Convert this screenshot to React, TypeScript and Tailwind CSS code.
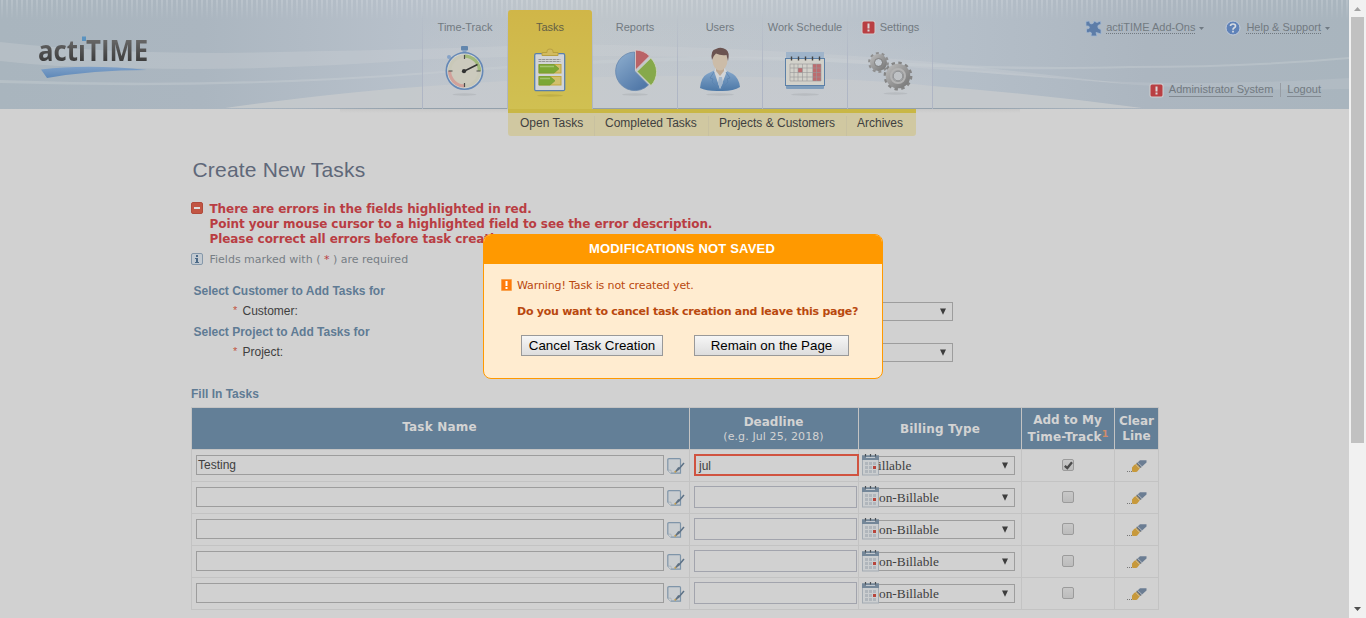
import React from "react";

const ARIAL = "font-['Liberation_Sans',Arial,sans-serif]";
const VERDANA = "font-['DejaVu_Sans',Verdana,sans-serif]";

function HeaderBackdrop() {
  return (
    <svg className="absolute inset-0" width="1349" height="114" viewBox="0 0 1349 114">
      <defs>
        <linearGradient id="sky" x1="0" x2="1" y1="0" y2="0">
          <stop offset="0" stopColor="#a9b5be" />
          <stop offset="0.15" stopColor="#abb6c0" />
          <stop offset="0.3" stopColor="#b7c0ca" />
          <stop offset="0.43" stopColor="#bfc6cb" />
          <stop offset="0.6" stopColor="#bcc4cc" />
          <stop offset="0.7" stopColor="#b5bfc9" />
          <stop offset="0.85" stopColor="#acb6c0" />
          <stop offset="1" stopColor="#a9b5be" />
        </linearGradient>
        <linearGradient id="shade" x1="0" x2="0" y1="0" y2="1">
          <stop offset="0" stopColor="#bdbdbd" />
          <stop offset="1" stopColor="#d1d1d1" />
        </linearGradient>
        <linearGradient id="line" x1="0" x2="1" y1="0" y2="0">
          <stop offset="0" stopColor="#93a0ab" stopOpacity="0" />
          <stop offset="0.2" stopColor="#93a0ab" />
          <stop offset="0.8" stopColor="#93a0ab" />
          <stop offset="1" stopColor="#93a0ab" stopOpacity="0" />
        </linearGradient>
        <linearGradient id="glow" x1="0" x2="0" y1="0" y2="1">
          <stop offset="0" stopColor="#c6cad0" stopOpacity="0" />
          <stop offset="1" stopColor="#c6cad0" stopOpacity="0.55" />
        </linearGradient>
        <pattern id="pin" width="5" height="20" patternUnits="userSpaceOnUse">
          <rect x="1" width="2" height="20" fill="#fff" />
        </pattern>
        <linearGradient id="mg" x1="0" x2="0" y1="0" y2="1">
          <stop offset="0" stopColor="#fff" />
          <stop offset="1" stopColor="#000" />
        </linearGradient>
        <mask id="m">
          <rect width="1349" height="20" fill="url(#mg)" />
        </mask>
      </defs>
      <rect width="1349" height="109" fill="url(#sky)" />
      <rect width="1349" height="20" fill="url(#pin)" mask="url(#m)" opacity="0.16" />
      <path d="M0 42Q100 53 220 53Q430 50 560 44Q760 47 932 62L1130 84L932 69Q700 50 430 59Q260 72 130 68Q60 68 0 61Z" fill="#cfd3d6" opacity="0.3" />
      <path d="M0 80Q220 88 430 72Q660 52 830 58Q1000 70 1130 66Q1250 66 1349 57V59Q1250 68 1130 68Q1000 72 830 62Q660 56 430 74Q220 90 0 83Z" fill="#cfd3d6" opacity="0.35" />
      <path d="M932 68Q1090 84 1200 83Q1290 82 1349 78V89Q1180 92 1060 78Q990 70 932 68Z" fill="#cfd3d6" opacity="0.22" />
      <path d="M225 108Q340 92 430 86Q560 76 680 76Q850 77 932 86Q1040 94 1142 108Z" fill="#c7cacd" opacity="0.85" />
      <rect x="423" y="20" width="509" height="88" fill="url(#glow)" />
      <rect x="225" y="108" width="920" height="1" fill="url(#line)" />
      <rect x="340" y="109" width="680" height="4" fill="url(#shade)" opacity="0.45" />
    </svg>
  );
}

function Logo() {
  return (
    <div className="relative w-[160px] pt-[4px]">
      <svg className="absolute top-0 left-0" width="116" height="56" viewBox="-2 -12 116 56">
        <defs>
          <linearGradient id="swoosh" x1="0" y1="0" x2="0" y2="1">
            <stop offset="0" stopColor="#7ea0c8" />
            <stop offset="1" stopColor="#5e88b8" />
          </linearGradient>
        </defs>
        <rect x="44" y="1.500" width="4" height="4.500" fill="#5b93c0" />
        <path d="M3 34.500Q50 29 109 35Q55 35 9 43Z" fill="url(#swoosh)" />
      </svg>
      <div className="relative ml-[2px] w-[140px] origin-left scale-x-[0.89] bg-linear-to-b from-[#666] from-30% to-[#3a3a3a] to-80% bg-clip-text font-['Open_Sans',sans-serif] text-[29px] leading-[45px] font-bold whitespace-nowrap text-transparent">
        actıTIME
      </div>
    </div>
  );
}

function Alert() {
  return (
    <svg width="15" height="15" viewBox="0 0 15 15" className="shrink-0">
      <rect x="0.500" y="0.500" width="14" height="14" rx="2.500" fill="#d0cfd0" />
      <rect x="1.500" y="1.500" width="12" height="12" rx="1.500" fill="#b93f43" />
      <path d="M6.500 3.500h2v5h-2zM6.500 9.500h2v2h-2z" fill="#dcd6d6" />
    </svg>
  );
}

function Stopwatch() {
  return (
    <svg width="44" height="54" viewBox="0.500 0 44 54">
      <ellipse cx="22" cy="50.500" rx="12" ry="1.200" fill="#a9adb1" opacity="0.500" />
      <rect x="18.500" y="2" width="7" height="4.500" rx="1" fill="#6286ad" />
      <rect x="20" y="6" width="4" height="3" fill="#86a2c1" />
      <circle cx="6.500" cy="13" r="2" fill="#86a2c7" />
      <circle cx="22" cy="27" r="18.200" fill="#d1d4d2" stroke="#6588b6" strokeWidth="1.600" />
      <circle cx="22" cy="27" r="16.600" fill="#c9c8b8" />
      <path d="M22 27V10.400A16.600 16.600 0 0 1 38.600 27Z" fill="#a0b979" />
      <path d="M22 27H5.400A16.600 16.600 0 0 0 22 43.600Z" fill="#d1a19a" />
      <circle cx="22" cy="27" r="13.300" fill="#cccabd" />
      <path d="M22 11v4M22 39v4M6 27h4M34 27h4" stroke="#4c4c4c" strokeWidth="1.200" />
      <path d="M22 27L35 20.500" stroke="#333" strokeWidth="1.400" />
      <circle cx="21.500" cy="27.200" r="2.100" fill="#333" />
    </svg>
  );
}

function Clipboard() {
  return (
    <svg width="44" height="54" viewBox="0 0 44 54">
      <ellipse cx="22" cy="51.500" rx="13" ry="1.200" fill="#a89838" opacity="0.400" />
      <rect x="6.700" y="9.700" width="30" height="37" rx="1.500" fill="#d2d4d6" stroke="#5980ad" strokeWidth="1.300" />
      <path d="M14 11.500V8.500h5V7q0-2 3-2t3 2v1.500h5v3Z" fill="#d2bb60" stroke="#b9a040" />
      <path d="M10.500 15.500h22M10.500 17.500h22" stroke="#8f8f8f" strokeWidth="0.900" strokeDasharray="3 .6" />
      <rect x="11" y="20.500" width="22" height="8.500" fill="#d1c06d" stroke="#c3a93c" />
      <path d="M11 20.500h15l5 4.200-5 4.300H11Z" fill="#7ca736" stroke="#759c35" strokeWidth="0.800" />
      <rect x="11" y="32.500" width="22" height="8.500" fill="#d1c06d" stroke="#c3a93c" />
      <path d="M11 32.500h11l5 4.200-5 4.300H11Z" fill="#7ca736" stroke="#759c35" strokeWidth="0.800" />
      <path d="M12 22.500h14M12 34.500h10" stroke="#a3c36f" strokeWidth="1.500" />
    </svg>
  );
}

function Pie() {
  return (
    <svg width="44" height="54" viewBox="0 0 44 54">
      <defs>
        <linearGradient id="pb" x1="0" y1="0" x2="0.700" y2="1">
          <stop offset="0" stopColor="#8fafcf" />
          <stop offset="1" stopColor="#5178a8" />
        </linearGradient>
      </defs>
      <ellipse cx="22" cy="50.500" rx="13" ry="1.200" fill="#a9adb1" opacity="0.500" />
      <path d="M21.500 27V8A19.300 19.300 0 1 0 35.500 41Z" fill="url(#pb)" stroke="#6686ad" strokeWidth="0.800" />
      <path d="M22.500 26V6A20 20 0 0 1 36.500 12Z" fill="#ba6367" stroke="#d6cccc" strokeWidth="0.800" />
      <path d="M24 27.500L37.800 14A19.500 19.500 0 0 1 38 41.500Z" fill="#86a94b" stroke="#d0d5c4" strokeWidth="0.800" />
    </svg>
  );
}

function Person() {
  return (
    <svg width="44" height="54" viewBox="0 0 44 54">
      <defs>
        <linearGradient id="suit" x1="0" y1="0" x2="0" y2="1">
          <stop offset="0" stopColor="#86a8cc" />
          <stop offset="1" stopColor="#4c78a7" />
        </linearGradient>
      </defs>
      <ellipse cx="22" cy="50.500" rx="14" ry="1.200" fill="#a9adb1" opacity="0.500" />
      <path d="M2 44Q3 33 9 30L17 26H27L35 30Q41 34 42 43Q35 47.500 22 47Q9 47.500 2 44Z" fill="url(#suit)" />
      <path d="M16 27L22 45L29 27L26 24H18Z" fill="#d2d5d8" />
      <path d="M21 33h3l1 6-3 6-2-6Z" fill="#a3b6cb" />
      <path d="M18 22h8v5l-4 5-4-5Z" fill="#bfa993" />
      <ellipse cx="22" cy="16.500" rx="7.500" ry="10" fill="#ccbca8" />
      <path d="M14 16Q12 6 18 5Q23 2.500 28 5.500Q32 8 30 17L28.500 11Q23 12 18 9.500Q15 12 14 16Z" fill="#6b5350" />
      <path d="M16 28l-4 6 3 1-1 3 7 7M28 28l4 6-3 1 1 3-7 7" fill="none" stroke="#5b83b0" strokeWidth="0.800" />
    </svg>
  );
}

function ScheduleIcon() {
  return (
    <svg width="44" height="54" viewBox="0 0 44 54">
      <ellipse cx="22" cy="50.500" rx="14" ry="1.200" fill="#a9adb1" opacity="0.500" />
      <rect x="3" y="8" width="38" height="37" rx="1" fill="#7f9dbb" />
      <rect x="3" y="8" width="38" height="8" fill="#9fb4ca" />
      <rect x="2.500" y="14.500" width="39" height="27" fill="#d2d1ca" stroke="#5c80a7" />
      <rect x="30" y="20" width="8" height="17" fill="#bc6c6f" />
      <rect x="15" y="24" width="4.500" height="4.500" fill="#bc6c6f" />
      <path d="M7 20h31M7 24h31M7 28.500h31M7 33h31M7 37h31M7 20v17M11 20v17M15 20v17M19.500 20v17M24 20v17M29.500 20v17M33.500 20v17M38 20v17" stroke="#999" strokeWidth="0.600" />
      <path d="M8.500 12.500v4M15.500 12.500v4M22.500 12.500v4M29.500 12.500v4M36.500 12.500v4" stroke="#444" strokeWidth="1.400" />
    </svg>
  );
}

function Gears() {
  return (
    <svg width="48" height="54" viewBox="0.500 0 48 54">
      <defs>
        <linearGradient id="steel" x1="0" y1="0" x2="1" y2="1">
          <stop offset="0" stopColor="#b4b4b4" />
          <stop offset="1" stopColor="#7c7c7c" />
        </linearGradient>
      </defs>
      <ellipse cx="30" cy="49.500" rx="12" ry="1.200" fill="#a9adb1" opacity="0.500" />
      <circle cx="13" cy="18.500" r="9.200" fill="none" stroke="#8f8f8f" strokeWidth="2.400" strokeDasharray="2.890 2.890" />
      <circle cx="13" cy="18.500" r="6" fill="none" stroke="url(#steel)" strokeWidth="5" />
      <circle cx="13" cy="18.500" r="4" fill="none" stroke="#7c7c7c" strokeWidth="0.800" />
      <circle cx="32.500" cy="32" r="13" fill="none" stroke="#858585" strokeWidth="2.800" strokeDasharray="3.400 3.400" />
      <circle cx="32.500" cy="32" r="8.800" fill="none" stroke="url(#steel)" strokeWidth="7" />
      <circle cx="32.500" cy="32" r="7" fill="none" stroke="#b3b3b3" strokeWidth="2" />
      <circle cx="32.500" cy="32" r="4.800" fill="#bfc2c5" stroke="#808080" strokeWidth="0.800" />
    </svg>
  );
}

const tabs = [
  { name: "Time-Track", icon: <Stopwatch /> },
  { name: "Tasks", icon: <Clipboard />, active: true },
  { name: "Reports", icon: <Pie /> },
  { name: "Users", icon: <Person /> },
  { name: "Work Schedule", icon: <ScheduleIcon /> },
  { name: "Settings", icon: <Gears />, alert: true },
];

function Divider() {
  return <div className="h-full w-px shrink-0 bg-linear-to-b from-[#aeb5c4]/0 via-[#aeb5c4]/80 to-[#aeb5c4]" />;
}

function Caret() {
  return (
    <svg width="5" height="3" viewBox="0 0 5 3" className="shrink-0">
      <path d="M0 0h5L2.500 3Z" fill="#707a83" />
    </svg>
  );
}

function Header() {
  return (
    <header className="relative h-[136px] shrink-0">
      <HeaderBackdrop />
      <div className={`relative flex items-start text-[11px] leading-[13px] text-[#727a81] ${ARIAL}`}>
        <div className="w-[422px] shrink-0 pt-[23px] pl-[36px]">
          <Logo />
        </div>
        <div className="w-[511px] shrink-0">
          <nav className="flex h-[109px] pt-[10px]">
            <Divider />
            {tabs.map((t) => (
              <React.Fragment key={t.name}>
                <div
                  className={
                    t.active
                      ? "flex w-[84px] shrink-0 flex-col items-center rounded-t-[3px] bg-linear-to-b from-[#d0b648] to-[#d0c052] pt-[11px] text-[#645f45]"
                      : "flex w-[84px] shrink-0 flex-col items-center pt-[11px]"
                  }
                >
                  <div className="flex h-[13px] items-center gap-1 whitespace-nowrap">
                    {t.alert && <Alert />}
                    <span>{t.name}</span>
                  </div>
                  <div className="mt-[10px]">{t.icon}</div>
                </div>
                <Divider />
              </React.Fragment>
            ))}
          </nav>
          <div className="ml-[86px] flex h-[27px] w-[408px] rounded-b-[3px] border-t-4 border-[#c9b745] bg-[#d0c8a1] pt-[3px] text-[12px] leading-[14px] text-[#404040]">
            <div className="w-[87px] border-r border-[#c8c1a0] pl-3">Open Tasks</div>
            <div className="w-[114px] border-r border-[#c8c1a0] pl-[10px]">Completed Tasks</div>
            <div className="w-[138px] border-r border-[#c8c1a0] pl-[10px]">Projects &amp; Customers</div>
            <div className="pl-[10px]">Archives</div>
          </div>
        </div>
        <div className="flex w-[397px] flex-col items-end pt-[20px]">
          <div className="flex h-4 items-center">
            <svg width="17" height="17" viewBox="0 0 17 17">
              <path d="M1 1.500L4.500 1L5 3.500Q7 4.500 8.500 3L9 1L12 2.500L15.500 1L16 4L13 5.500Q12.500 7 13.500 8.500L16 9.500V14L13 13L11 12.500L12 16H6L6.500 13Q5 11 3 13L1.500 12V9L4 8.500Q5 7 3.500 6L1 6Z" fill="#5d7da8" stroke="#9fb5d0" strokeWidth="0.800" />
            </svg>
            <span className="mb-[1px] ml-1 border-b border-dotted border-[#727a81] leading-[12px]">actiTIME Add-Ons</span>
            <span className="ml-1"><Caret /></span>
            <svg className="ml-[21px] mr-px" width="16" height="16" viewBox="0 0 16 16">
              <circle cx="8" cy="8" r="7" fill="#5f82b8" stroke="#c3ccda" strokeWidth="1" />
              <path d="M5.500 6Q5.500 4 8 4T10.500 6Q10.500 7.200 9 8Q8 8.600 8 9.700M8 10.700v1.700" fill="none" stroke="#d8dce2" strokeWidth="1.700" />
            </svg>
            <span className="mb-[1px] ml-1 border-b border-dotted border-[#727a81] leading-[12px]">Help &amp; Support</span>
            <span className="ml-1"><Caret /></span>
          </div>
          <div className="mt-[46px] mr-[9px] flex h-4 items-center">
            <Alert />
            <span className="ml-[5px] border-b border-[#838b93]">Administrator System</span>
            <span className="mr-[6px] ml-[7px] h-[14px] w-px bg-[#979da4]" />
            <span className="border-b border-[#838b93]">Logout</span>
          </div>
        </div>
      </div>
    </header>
  );
}

function EditIcon() {
  return (
    <svg width="18" height="18" viewBox="0 0 18 18">
      <path d="M2 .6h10.500q1 0 1 1V15.200H4L.8 12V1.800Q.8.600 2 .6Z" fill="#c9cdd0" stroke="#7f95a9" strokeWidth="1.200" />
      <path d="M1 12.200h3V15.500" fill="#dcdcdc" stroke="#a0abb5" strokeWidth="0.800" />
      <path d="M17 5L11 12" stroke="#5b7186" strokeWidth="1.500" />
      <path d="M12 9.500L9 13.500" stroke="#5f7183" strokeWidth="1.900" />
      <path d="M8.800 13L7.800 14.500" stroke="#c09a4a" strokeWidth="1.600" />
    </svg>
  );
}

function CalendarIcon() {
  const cells = [8, 12, 16].flatMap((y) => [3, 7, 11].map((x) => ({ x, y })));
  return (
    <svg width="17" height="22" viewBox="0 0 17 22">
      <rect x="0.500" y="1.500" width="16" height="19.500" fill="#cbced0" stroke="#a3abb3" />
      <rect x="0" y="1.500" width="17" height="4.500" fill="#748799" />
      <path d="M4 3.500h9" stroke="#c3c9cf" />
      <path d="M3.500 0v2.500M8.500 0v2.500M13.500 0v2.500" stroke="#4a4f55" strokeWidth="1.200" />
      {cells.map((c) => (
        <rect key={`${c.x}-${c.y}`} x={c.x} y={c.y} width="3" height="3" fill="#b0b6bc" />
      ))}
      <rect x="11" y="12" width="3" height="3" fill="#b8453c" />
    </svg>
  );
}

function Eraser() {
  return (
    <svg width="20" height="14" viewBox="0 0 20 14">
      <path d="M0 11.500h6" stroke="#777" strokeDasharray="1 1" />
      <path d="M5 7.500Q7 4.500 9.500 3.500L13.500 7.500L10 11.800Q7 12.500 5 11.500Z" fill="#c7993b" />
      <path d="M9.500 3.500L13 .3H19.500V2.500L13.700 7.800Z" fill="#6b7d93" />
      <path d="M8.700 4.300L12.800 8.500M10.700 2.500L15 6.700" stroke="#c9c9c9" strokeWidth="0.800" />
      <path d="M9.700 3.400L13.900 7.600" stroke="#555" strokeWidth="1" strokeDasharray="1.200 .6" />
    </svg>
  );
}

function Down() {
  return (
    <svg width="6" height="7" viewBox="0 0 6 7" className="mb-px shrink-0">
      <path d="M0 .5h6L3 6.800Z" fill="#3d3d3d" />
    </svg>
  );
}

type Row = { task?: string; date?: string; type: string; on?: boolean };

const rows: Row[] = [
  { task: "Testing", date: "jul", type: "illable", on: true },
  { type: "on-Billable" },
  { type: "on-Billable" },
  { type: "on-Billable" },
  { type: "on-Billable" },
];

function TaskTable() {
  const grid = "grid grid-cols-[498px_169px_163px_93px_44px]";
  const head = "flex flex-col items-center border-r border-b border-[#c3c3c3] bg-[#637f97] text-center";
  const cell = "border-r border-b border-[#c3c3c3]";
  return (
    <div className="ml-[191px] w-[968px] border-t border-l border-[#c3c3c3]">
      <div className={`${grid} h-[42px] text-[12px] leading-[15px] font-bold text-[#d3d3d3] ${VERDANA}`}>
        <div className={`${head} pt-[12px] pr-[2px] tracking-[0.2px]`}>Task Name</div>
        <div className={`${head} pt-[7px]`}>
          <span className="pr-px">Deadline</span>
          <span className="pr-px text-[11px] leading-[14px] font-normal tracking-[0.1px]">(e.g. Jul 25, 2018)</span>
        </div>
        <div className={`${head} pt-[14px] tracking-[0.15px]`}>Billing Type</div>
        <div className={`${head} pt-[5px]`}>
          <span className="pr-px">Add to My</span>
          <span className="pt-[2px] whitespace-nowrap">
            <span className="tracking-[0.2px]">Time-Track</span>
            <sup className="-top-[4px] text-[9.5px] leading-none font-bold text-[#d08c6b]">1</sup>
          </span>
        </div>
        <div className={`${head} pt-[6px]`}>
          <span>Clear</span>
          <span>Line</span>
        </div>
      </div>
      {rows.map((r, i) => (
        <div key={i} className={`${grid} h-8 text-[#404040]`}>
          <div className={`${cell} flex pt-[5px] pl-1`}>
            <div className={`h-5 w-[468px] border border-[#9d9d9d] pl-[1px] text-[12px] leading-[19px] ${ARIAL}`}>{r.task}</div>
            <div className="pt-[3px] pl-[3px]"><EditIcon /></div>
          </div>
          <div className={`${cell} pt-1 pl-1`}>
            <div
              className={
                r.date
                  ? `relative h-[22px] w-[165px] border-2 border-[#d05340] pl-[3px] text-[12px] leading-[20px] ${ARIAL}`
                  : "h-[22px] w-[163px] border border-[#a2a4ad]"
              }
            >
              {r.date}
            </div>
          </div>
          <div className={`${cell} flex pt-1 pl-[3px]`}>
            <CalendarIcon />
            <div className="mt-[2px] flex h-[19px] w-[136px] items-center justify-between border border-l-0 border-[#9d9d9d] pr-[6px] font-['Liberation_Serif',serif] text-[13.33px] leading-[17px]">
              <span className={r.on ? "-ml-px" : ""}>{r.type}</span>
              <Down />
            </div>
          </div>
          <div className={`${cell} flex justify-center pt-[9px]`}>
            <div className="flex h-3 w-3 items-center justify-center rounded-[2px] border border-[#9b9b9b] bg-linear-to-b from-[#c8c8c8] to-[#bcbcbc]">
              {r.on && (
                <svg width="9" height="9" viewBox="0 0 9 9">
                  <path d="M.8 4.800L3.300 7L8 1.200" fill="none" stroke="#4c4c4c" strokeWidth="2.300" />
                </svg>
              )}
            </div>
          </div>
          <div className={`${cell} pt-[10px] pl-[12px]`}><Eraser /></div>
        </div>
      ))}
    </div>
  );
}

function Main() {
  const section = "text-[12px] leading-[14px] font-bold text-[#5f7b94]";
  const field = "flex h-[19px] items-center";
  const select = "ml-auto flex h-[19px] w-[153px] items-center justify-end border border-[#9d9d9d] pr-[6px]";
  return (
    <main className={`text-[12px] text-[#404040] ${ARIAL}`}>
      <h1 className="pt-[22px] pl-[192.5px] text-[21px] leading-6 tracking-[0.18px] text-[#5f6879]">Create New Tasks</h1>
      <div className={`mt-[19px] ml-[191px] flex text-[12px] leading-[15px] font-bold tracking-[-0.07px] text-[#b93d43] ${VERDANA}`}>
        <svg className="mt-[1px] mr-[6.5px]" width="12" height="12" viewBox="0 0 12 12">
          <rect x="0.500" y="0.500" width="11" height="11" rx="1.500" fill="#c25543" stroke="#b04b3c" />
          <path d="M3 6h6" stroke="#ddd" strokeWidth="2" />
        </svg>
        <div className="pt-px whitespace-nowrap">
          <p>There are errors in the fields highlighted in red.</p>
          <p>Point your mouse cursor to a highlighted field to see the error description.</p>
          <p>Please correct all errors before task creation.</p>
        </div>
      </div>
      <div className={`mt-[5px] ml-[191px] flex text-[11px] leading-[14px] text-[#777e85] ${VERDANA}`}>
        <svg className="mt-[1px] mr-[6.5px]" width="12" height="12" viewBox="0 0 12 12">
          <rect x="0.500" y="0.500" width="11" height="11" rx="1.500" fill="#c3cad1" stroke="#8598aa" />
          <path d="M5 2h2v2H5zM4 5h3v4h1v1H4V9h1V6H4z" fill="#4c6a87" />
        </svg>
        <p className="pt-px">Fields marked with ( <span className="text-[#b93d43]">*</span> ) are required</p>
      </div>
      <h2 className={`${section} mt-[17px] ml-[193.5px]`}>Select Customer to Add Tasks for</h2>
      <div className={`${field} mt-1 ml-[233px] w-[720px]`}>
        <span className="w-[9.5px] pb-[2px] text-[11px] text-[#c25543]">*</span>
        <span className="pb-[2px]">Customer:</span>
        <div className={select}><Down /></div>
      </div>
      <h2 className={`${section} mt-1 ml-[193.5px]`}>Select Project to Add Tasks for</h2>
      <div className={`${field} mt-1 ml-[233px] w-[720px]`}>
        <span className="w-[9.5px] pb-[2px] text-[11px] text-[#c25543]">*</span>
        <span className="pb-[2px]">Project:</span>
        <div className={select}><Down /></div>
      </div>
      <h2 className={`${section} mt-[25px] mb-[6px] ml-[191px]`}>Fill In Tasks</h2>
      <TaskTable />
    </main>
  );
}

function Dialog() {
  const button = "flex h-[21px] items-center justify-center border border-[#999] bg-linear-to-b from-[#f6f6f6] to-[#dddddd] text-[13.33px] leading-none whitespace-nowrap text-black";
  return (
    <div role="dialog" className={`absolute top-[234px] left-[483px] h-[145px] w-[400px] overflow-hidden rounded-[8px] border border-[#ff9900] bg-[#ffecd0] ${ARIAL}`}>
      <div className="h-[29px] bg-[#ff9900] pr-[2px] text-center text-[13px] leading-[27px] font-bold tracking-[0.2px] text-white">MODIFICATIONS NOT SAVED</div>
      <div className={`text-[11px] text-[#b9480e] ${VERDANA}`}>
        <div className="flex items-center pt-[14px] pl-[17px] leading-[14px]">
          <svg className="-mt-[2px]" width="11" height="12" viewBox="0 0 11 12">
            <rect width="11" height="12" rx="1" fill="#f9a24e" />
            <rect x="1" y="1" width="9" height="10" fill="#ff7a0a" />
            <path d="M4.500 2h2v5h-2zM4.500 8h2v2h-2z" fill="#fff" />
          </svg>
          <span className="ml-[5px] pt-px tracking-[-0.12px]">Warning! Task is not created yet.</span>
        </div>
        <p className="mt-[12px] pl-[33px] leading-[14px] font-bold tracking-[-0.25px] whitespace-nowrap">Do you want to cancel task creation and leave this page?</p>
      </div>
      <div className="mt-[16px] flex gap-[31px] pl-[37px]">
        <button className={`${button} w-[142px]`}>Cancel Task Creation</button>
        <button className={`${button} w-[155px]`}>Remain on the Page</button>
      </div>
    </div>
  );
}

function Scrollbar() {
  return (
    <div className="flex w-[17px] shrink-0 flex-col items-center bg-[#f1f1f1]">
      <svg width="17" height="17" viewBox="0 0 17 17">
        <path d="M5 11L8.500 7L12 11Z" fill="#a3a3a3" />
      </svg>
      <div className="h-[426px] w-[13px] bg-[#c1c1c1]" />
      <svg className="mt-auto" width="17" height="17" viewBox="0 0 17 17">
        <path d="M5 6L8.500 10L12 6Z" fill="#505050" />
      </svg>
    </div>
  );
}

export default function App() {
  return (
    <div className="relative flex h-[618px] w-[1366px] overflow-hidden bg-[#d1d1d1]">
      <div className="flex w-[1349px] shrink-0 flex-col">
        <Header />
        <Main />
      </div>
      <Scrollbar />
      <Dialog />
    </div>
  );
}
